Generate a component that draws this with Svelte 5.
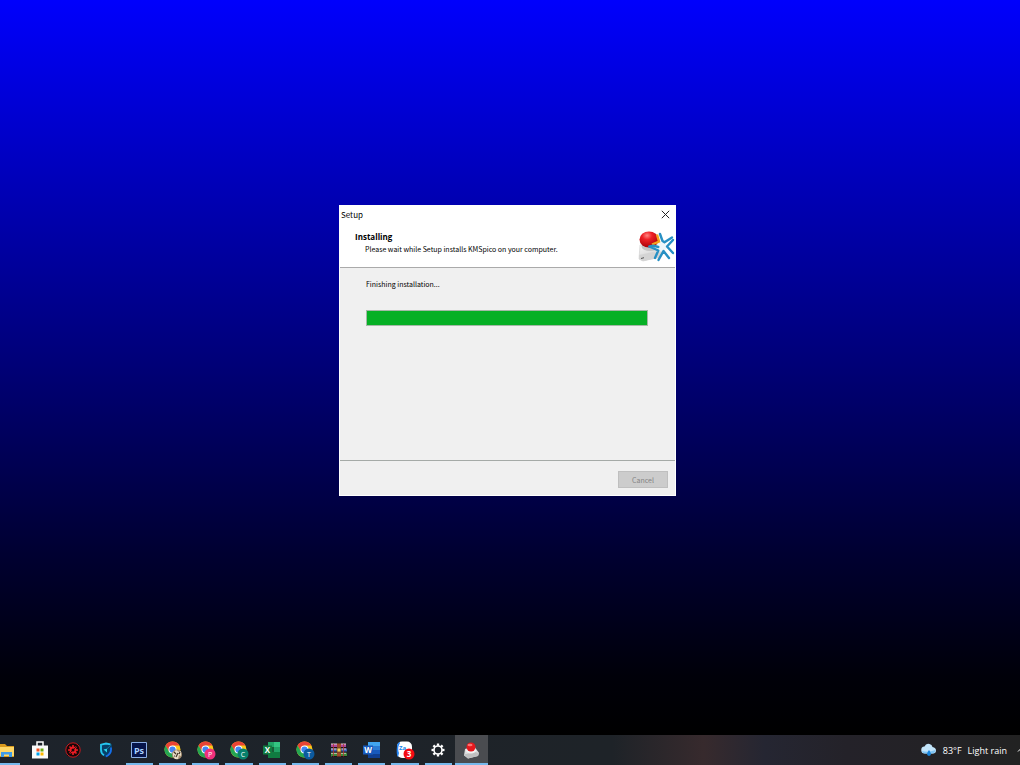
<script lang="ts">
	type App = { name: string; kind: string; open?: boolean; active?: boolean; badge?: string; tint?: string };

	const apps: App[] = [
		{ name: 'File Explorer', kind: 'folder', open: true },
		{ name: 'Store', kind: 'store' },
		{ name: 'Recorder', kind: 'gear-red' },
		{ name: 'Security', kind: 'shield' },
		{ name: 'Photoshop', kind: 'ps', open: true },
		{ name: 'Chrome', kind: 'chrome', open: true, tint: 'photo' },
		{ name: 'Chrome P', kind: 'chrome', open: true, badge: 'P', tint: '#f0307c' },
		{ name: 'Chrome C', kind: 'chrome', open: true, badge: 'C', tint: '#08806c' },
		{ name: 'Excel', kind: 'excel', open: true },
		{ name: 'Chrome T', kind: 'chrome', open: true, badge: 'T', tint: '#0c5a9e' },
		{ name: 'WinRAR', kind: 'rar', open: true },
		{ name: 'Word', kind: 'word', open: true },
		{ name: 'Zalo', kind: 'zalo', open: true },
		{ name: 'Settings', kind: 'settings', open: true },
		{ name: 'Setup', kind: 'setup', open: true, active: true }
	];

	const teeth = [0, 45, 90, 135, 180, 225, 270, 315];
	let progress = $state(100);
</script>

<div class="desktop">
	<main class="workspace">
		<section class="dialog" role="dialog" aria-labelledby="title">
			<div class="titlebar">
				<span id="title">Setup</span>
				<button class="close" aria-label="Close">
					<svg width="9" height="9" viewBox="0 0 9 9"><path d="M.8.8l7.4 7.4M8.2.8L.8 8.2" stroke="#222" /></svg>
				</button>
			</div>
			<header class="header">
				<div class="heading">
					<h1>Installing</h1>
					<p>Please wait while Setup installs KMSpico on your computer.</p>
				</div>
				<svg class="logo" width="38" height="34" viewBox="0 0 38 34">
					<defs>
						<radialGradient id="ball" cx=".4" cy=".25" r=".75">
							<stop offset="0" stop-color="#ff8580" />
							<stop offset=".35" stop-color="#ee2026" />
							<stop offset="1" stop-color="#a80008" />
						</radialGradient>
						<linearGradient id="base" x2=".5" y2="1">
							<stop offset="0" stop-color="#fafafa" />
							<stop offset="1" stop-color="#d0d0d0" />
						</linearGradient>
					</defs>
					<path d="M3 15l16-3 7 11-3 4-17 4-4-2z" fill="url(#base)" stroke="#ccc" stroke-width=".6" />
					<path d="M2 25l14-3 9 3-3 3-16 3-4-2z" fill="#d4d4d4" />
					<path d="M4 28.500l3-.8" stroke="#555" />
					<ellipse cx="13" cy="16.500" rx="8.500" ry="4.500" fill="#c4c4c4" />
					<ellipse cx="12" cy="9.500" rx="9.500" ry="8" fill="url(#ball)" />
					<path d="M22 12l6 1 3 3.500-4 5-6 0-3-4z" fill="#edf6fa" />
					<path d="M20 4.500l2 7-7 3" fill="none" stroke="#f7a21c" stroke-width="2.400" />
					<g fill="none" stroke="#2790c4" stroke-width="2.400" stroke-linecap="round" stroke-linejoin="round">
						<path d="M23 4l2.500 7 2 1.300L35 7.500" />
						<path d="M36 10l-6 6.500 6 6.500" />
						<path d="M32 28l-5.500-7-5 9" />
						<path d="M18 28l3.300-7.500-9-4 4-.8 5 1.300" />
					</g>
				</svg>
			</header>
			<div class="body">
				<label for="progress">Finishing installation...</label>
				<progress id="progress" max="100" value={progress}></progress>
			</div>
			<footer class="footer">
				<button class="cancel" disabled>Cancel</button>
			</footer>
		</section>
	</main>

	<nav class="taskbar">
		<div class="apps">
			{#each apps as app}
				<button class="app" class:open={app.open} class:active={app.active} aria-label={app.name}>
					<svg width="20" height="20" viewBox="0 0 20 20">
						{#if app.kind === 'folder'}
							<path d="M2 4h6l2 2h7v11H2z" fill="#d99a1e" />
							<path d="M2 7h15v9H2z" fill="#ffd867" />
							<path d="M4 17v-5h11v5h-3v-2.500H7V17z" fill="#3f9be8" />
						{:else if app.kind === 'store'}
							<path d="M7 6V2h6v4" fill="none" stroke="#fff" stroke-width="1.500" />
							<path d="M2 5.500h16v13H2z" fill="#fafafa" />
							<path d="M6.500 8.500h3v3h-3z" fill="#f25022" />
							<path d="M10.500 8.500h3v3h-3z" fill="#66a80f" />
							<path d="M6.500 12.500h3v3h-3z" fill="#00a4ef" />
							<path d="M10.500 12.500h3v3h-3z" fill="#ffb900" />
						{:else if app.kind === 'gear-red'}
							<circle cx="10" cy="10" r="7.200" fill="#160808" stroke="#c8191f" />
							<circle cx="10" cy="10" r="2.500" fill="none" stroke="#ed1c24" stroke-width="2" />
							{#each teeth as angle}
								<path d="M10 5v2" stroke="#ed1c24" stroke-width="1.600" transform="rotate({angle} 10 10)" />
							{/each}
							<path d="M4 16L16 4" stroke="#160808" stroke-width=".7" />
						{:else if app.kind === 'shield'}
							<path d="M10 3l6 1.500v5q0 5-6 8-6-3-6-8v-5z" fill="#073f68" />
							<path d="M14.500 4.400L10 3.500 5 4.700v5q0 3.600 3 5.600" fill="none" stroke="#26c6ee" stroke-width="1.800" />
							<path d="M15 7.500v2.200q0 4-5 6.800" fill="none" stroke="#176ee8" stroke-width="1.800" />
							<path d="M16 4l-5 4.500v4L7.500 9.500l4-1" fill="#27d4e8" />
						{:else if app.kind === 'ps'}
							<path d="M2.500 2.500h15v15h-15z" fill="#06154b" stroke="#8aaee5" />
							<text x="10" y="13.500" text-anchor="middle" font-size="9" font-weight="bold" fill="#a8d1ff">Ps</text>
						{:else if app.kind === 'chrome'}
							<circle cx="9.500" cy="9.500" r="8" fill="#fbc817" />
							<path d="M2.570 5.500A8 8 0 0 1 16.430 5.500H9.500L6 11.500z" fill="#ea4335" />
							<path d="M2.570 5.500A8 8 0 0 0 9.500 17.500L13 11.500 9.500 13 6 11.500z" fill="#24a652" />
							<circle cx="9.500" cy="9.500" r="4" fill="#fff" />
							<circle cx="9.500" cy="9.500" r="3.100" fill="#4285f4" />
							{#if app.tint === 'photo'}
								<circle cx="14" cy="14.500" r="5" fill="#a68f72" />
								<path d="M10 13l3-3 3 2 2-1v5l-2-1-1 4h-3l-2-3z" fill="#e8dcc8" />
								<path d="M11 12l2 2M15 13l-2 4M17 12l-1 2M11 16h1" stroke="#433425" stroke-width="1.200" />
							{:else}
								<circle cx="14" cy="14" r="5.500" fill={app.tint} />
								<text x="14" y="16.500" text-anchor="middle" font-size="7" fill="#fff">{app.badge}</text>
							{/if}
						{:else if app.kind === 'excel'}
							<path d="M6 2h12v16H6z" fill="#21a366" />
							<path d="M12 2h6v5h-6z" fill="#33c481" />
							<path d="M6 12h12v6H6z" fill="#107c41" />
							<path d="M6 7h6v5H6z" fill="#185c37" />
							<path d="M1 5.500h9v9H1z" fill="#107c41" />
							<text x="5.500" y="13" text-anchor="middle" font-size="8" font-weight="bold" fill="#fff">X</text>
						{:else if app.kind === 'rar'}
							<path d="M2 4h15v4H2z" fill="#a8489c" />
							<path d="M2 8.500h16v3.500H2z" fill="#3b62b8" />
							<path d="M2 12.500h16v4H2z" fill="#3d8b3c" />
							<path d="M2 4h6M12 4h5M2 9h6M12 9h5M2 13.200h6M12 13.200h5" stroke="#f0dcd8" stroke-width=".9" />
							<path d="M2 7.500h16M2 12h16M3 16.500h15" stroke="#211019" />
							<path d="M4.500 4v12.500M14.500 4v12.500" stroke="#b33530" stroke-width=".8" />
							<path d="M8 3.500h4v13H8z" fill="#a04a28" />
							<path d="M8 8h4v4H8z" fill="#f5d458" stroke="#553922" stroke-width=".8" />
						{:else if app.kind === 'word'}
							<path d="M6 2h12v16H6z" fill="#2b7cd3" />
							<path d="M6 2h12v4H6z" fill="#41a5ee" />
							<path d="M6 10h12v4H6z" fill="#185abd" />
							<path d="M6 14h12v4H6z" fill="#103f91" />
							<path d="M1 5.500h10v9H1z" fill="#185abd" />
							<text x="6" y="13" text-anchor="middle" font-size="8" font-weight="bold" fill="#fff">W</text>
						{:else if app.kind === 'zalo'}
							<rect x="2" y="1.500" width="15" height="16.500" rx="5" fill="#fff" />
							<path d="M5 3Q2 8 4 13l-1 4Q1 15 2 6q0-3 3-4" fill="#2686f5" />
							<text x="4" y="10" font-size="6" font-weight="bold" fill="#1684e8">Za</text>
							<circle cx="14" cy="14" r="5.500" fill="#f40b12" />
							<text x="14" y="16.800" text-anchor="middle" font-size="8" font-weight="bold" fill="#fff">3</text>
						{:else if app.kind === 'settings'}
							<circle cx="10" cy="10" r="4" fill="none" stroke="#fff" stroke-width="1.600" />
							{#each teeth as angle}
								<path d="M10 3.500v2.300" stroke="#fff" stroke-width="2.300" transform="rotate({angle} 10 10)" />
							{/each}
						{:else}
							<path d="M4 9l9-3 5 7-1 3-10 2.500-4-3z" fill="#dedede" />
							<path d="M3 14.500l11-2.500 4 1-1 3-10 2.500z" fill="#c0c0c0" />
							<ellipse cx="10" cy="10.500" rx="5" ry="3" fill="#f2f2f2" />
							<ellipse cx="10" cy="7" rx="4.500" ry="4.500" fill="#e5191e" />
							<ellipse cx="9" cy="5" rx="2.500" ry="1.200" fill="#fb7471" />
						{/if}
					</svg>
				</button>
			{/each}
		</div>
		<div class="tray">
			<button class="weather">
				<svg width="16" height="14" viewBox="0 0 16 14">
					<path d="M4 10.500a3.500 3.500 0 0 1-.5-7Q5 0 8.500 1q2.500.5 3 3Q15 4.500 15 7.500q0 3-3 3z" fill="#c2e4fa" />
					<path d="M1 8q6 2 13.500-1-.5 3.500-3 3.500H4Q1.500 10.500 1 8" fill="#80c5f4" />
					<path d="M8 7q-4 5 0 6 4-1 0-6" fill="#1684dc" />
				</svg>
				<span>83°F</span>
				<span>Light rain</span>
			</button>
			<button class="more" aria-label="Show hidden icons">
				<svg width="8" height="6" viewBox="0 0 8 6"><path d="M1 4.500L4 1.500l3 3" fill="none" stroke="#fff" /></svg>
			</button>
		</div>
	</nav>
</div>

<style>
	:global(body) {
		overflow: hidden;
	}
	.desktop {
		height: 100vh;
		display: flex;
		flex-direction: column;
		background: #000;
		font-family: 'Open Sans', 'Noto Sans', sans-serif;
	}
	button {
		border: 0;
		padding: 0;
		background: none;
		font: inherit;
		color: inherit;
	}
	.workspace {
		flex: 1;
		display: flex;
		align-items: center;
		justify-content: center;
		padding: 0 5px 34px 0;
		background: linear-gradient(#0000fc, #0000b8 25%, #000076 50%, #000032 75%, #000009 92%, #000);
	}
	.dialog {
		box-sizing: border-box;
		width: 337px;
		background: #f0f0f0;
		border: 1px solid #fff;
		color: #000;
		font-family: 'Noto Sans CJK SC', 'Noto Sans', sans-serif;
		font-size: 7px;
		line-height: 12px;
	}
	.titlebar {
		display: flex;
		justify-content: space-between;
		align-items: center;
		height: 17px;
		padding: 0 5px 0 1px;
		background: #fff;
		font-size: 8px;
	}
	.close {
		display: flex;
	}
	.header {
		display: flex;
		justify-content: space-between;
		height: 44px;
		padding: 0 0 0 15px;
		background: #fff;
		border-bottom: 1px solid #aaa;
	}
	.heading {
		padding-top: 8px;
	}
	.logo {
		margin-top: 7px;
	}
	h1 {
		margin: 0;
		font-family: 'Open Sans', 'Noto Sans', sans-serif;
		font-size: 8px;
		line-height: 12px;
	}
	p {
		margin: 0 0 0 10px;
	}
	.body {
		display: flex;
		flex-direction: column;
		gap: 20px;
		height: 182px;
		padding: 10px 27px 0 26px;
	}
	progress {
		appearance: none;
		box-sizing: border-box;
		width: 100%;
		height: 16px;
		border: 1px solid #a5b8a7;
		background: #e6e6e6;
	}
	progress::-webkit-progress-bar {
		background: #e6e6e6;
	}
	progress::-webkit-progress-value {
		background: #06b025;
	}
	.footer {
		display: flex;
		justify-content: flex-end;
		padding: 10px 7px 7px;
		border-top: 1px solid #a5aaa7;
	}
	.cancel {
		width: 50px;
		height: 17px;
		background: #ccc;
		border: 1px solid #bfbfbf;
		color: #838383;
	}
	.taskbar {
		display: flex;
		justify-content: space-between;
		height: 30px;
		background: linear-gradient(90deg, #1d232b, #1e2328 60%, #372a2d 69%, #252632 75%, #242229 83%, #222);
		color: #fff;
	}
	.apps {
		display: grid;
		grid-template-columns: repeat(15, 1fr);
		width: 498px;
		margin-left: -10px;
	}
	.app {
		display: flex;
		align-items: center;
		justify-content: center;
		position: relative;
	}
	.app.open::after {
		content: '';
		position: absolute;
		inset: auto 3px 0;
		height: 2px;
		background: #76b9ed;
	}
	.app.active {
		background: #4a4c50;
	}
	.app.active::after {
		inset: auto 0 0;
	}
	.tray {
		display: flex;
		font-size: 9px;
	}
	.weather {
		display: flex;
		align-items: center;
		gap: 6px;
	}
	.more {
		display: flex;
		align-items: center;
		margin: 0 -5px 0 10px;
	}
</style>
